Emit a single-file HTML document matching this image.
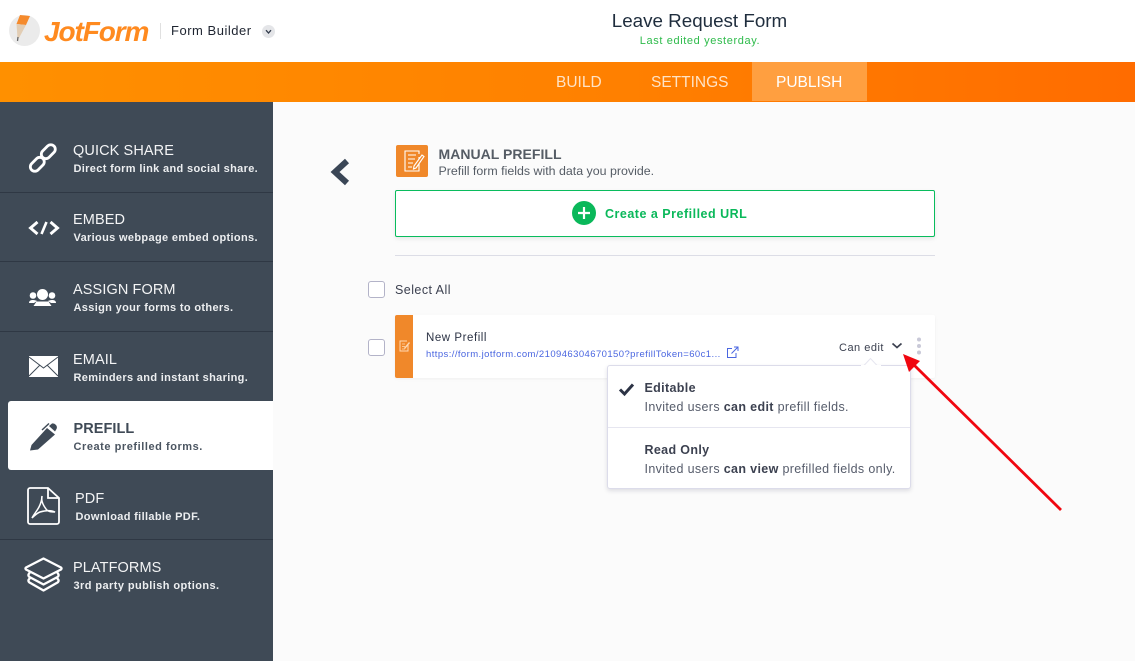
<!DOCTYPE html>
<html><head><meta charset="utf-8"><style>
*{box-sizing:border-box}
html,body{margin:0;padding:0}
body{width:1135px;height:661px;position:relative;overflow:hidden;background:#fbfbfb;font-family:"Liberation Sans",sans-serif;color:#2c3345}
.a,.t{position:absolute;white-space:nowrap}
.t{line-height:16px}
.h{color:#f3f4f5;font-size:14.5px;letter-spacing:.1px}
.s{color:#eceef0;font-size:11px;font-weight:bold;letter-spacing:.34px}
.sep{position:absolute;left:0;width:273px;height:1px;background:#2f3844}
svg{position:absolute;overflow:visible}
</style></head><body>
<div class="a" style="left:0;top:0;width:1135px;height:62px;background:#fff"></div>
<div class="a" style="left:9px;top:15px;width:31px;height:31px;border-radius:50%;background:#ebebeb"></div>
<svg style="left:9px;top:15px" width="31" height="31"><path d="M11 0L21 1L17 10L7.500 9Z" fill="#f58a2c"/><path d="M7.500 9L17 10L10 23L8.500 23Z" fill="#e2cdb4"/><path d="M9 22L8.500 26" stroke="#666" stroke-width="1.300"/></svg>
<div class="t" style="left:44px;top:14px;font-size:28px;line-height:36px;font-weight:bold;font-style:italic;color:#ff8a1f;letter-spacing:-1.1px">JotForm</div>
<div class="a" style="left:160px;top:23px;width:1px;height:16px;background:#e0e0e0"></div>
<div class="t" style="left:171px;top:23px;font-size:13px;color:#1e2430;letter-spacing:.52px">Form Builder</div>
<div class="a" style="left:262px;top:25px;width:13px;height:13px;border-radius:50%;background:#e4e5e8"></div>
<svg style="left:262px;top:25px" width="13" height="13"><path d="M4 5.200L6.500 8L9 5.200" fill="none" stroke="#333c4c" stroke-width="1.300"/></svg>
<div class="t" style="left:540px;width:319px;text-align:center;top:10px;font-size:18.800px;line-height:22px;color:#1f2d3d">Leave Request Form</div>
<div class="t" style="left:540px;width:320px;text-align:center;top:33px;font-size:11px;color:#2ebb4b;letter-spacing:.62px">Last edited yesterday.</div>

<div class="a" style="left:0;top:62px;width:1135px;height:40px;background:linear-gradient(90deg,#ff9000 0%,#ff8000 55%,#ff6c00 100%)"></div>
<div class="a" style="left:752px;top:62px;width:115px;height:39px;background:#ff9f40"></div>
<div class="t" style="left:556px;top:75px;font-size:15.500px;color:#ffe3c6">BUILD</div>
<div class="t" style="left:651px;top:75px;font-size:15.500px;color:#ffe3c6">SETTINGS</div>
<div class="t" style="left:776px;top:75px;font-size:15.500px;color:#fff">PUBLISH</div>

<div class="a" style="left:0;top:102px;width:273px;height:559px;background:#3f4a56"></div>
<div class="sep" style="top:192px"></div><div class="sep" style="top:261px"></div><div class="sep" style="top:331px"></div><div class="sep" style="top:539px"></div>
<div class="a" style="left:8px;top:401px;width:265px;height:69px;background:#fff;border-radius:3px 0 0 3px"></div>

<div class="t h" style="left:73px;top:143px">QUICK SHARE</div><div class="t s" style="left:73.500px;top:161px">Direct form link and social share.</div>
<div class="t h" style="left:73px;top:212px">EMBED</div><div class="t s" style="left:73.500px;top:230px">Various webpage embed options.</div>
<div class="t h" style="left:73px;top:282px">ASSIGN FORM</div><div class="t s" style="left:73.500px;top:300px">Assign your forms to others.</div>
<div class="t h" style="left:73px;top:352px">EMAIL</div><div class="t s" style="left:73.500px;top:370px">Reminders and instant sharing.</div>
<div class="t h" style="left:73.500px;top:421px;color:#3f4a56;font-weight:bold;letter-spacing:.05px">PREFILL</div><div class="t s" style="left:73.500px;top:439px;color:#4b5561;letter-spacing:.55px">Create prefilled forms.</div>
<div class="t h" style="left:75px;top:491px">PDF</div><div class="t s" style="left:75.500px;top:509px">Download fillable PDF.</div>
<div class="t h" style="left:73px;top:560px">PLATFORMS</div><div class="t s" style="left:73.500px;top:578px;letter-spacing:.42px">3rd party publish options.</div>

<svg style="left:28px;top:143px" width="30" height="30" fill="none" stroke="#fff" stroke-width="2.800"><rect x="12.300" y="4.200" width="16" height="9" rx="4.500" transform="rotate(-45 20.300 8.700)"/><rect x="1.300" y="16.800" width="16" height="9" rx="4.500" transform="rotate(-45 9.300 21.300)"/></svg>
<svg style="left:28px;top:220px" width="32" height="16" fill="none" stroke="#fff" stroke-width="2.900"><path d="M9.500 2L2.500 8L9.500 14"/><path d="M22.500 2L29.500 8L22.500 14"/><path d="M18.500 2L13.500 14" stroke-width="2.600"/></svg>
<svg style="left:29px;top:288px" width="28" height="18" fill="#fff"><circle cx="13.500" cy="6.500" r="5.500"/><circle cx="4" cy="7.500" r="3.300"/><circle cx="23" cy="7.500" r="3.300"/><path d="M4.500 18L7.500 13.500H19.500L22.500 18Z"/><path d="M0 15C0 12.500 2 12 4 12C6 12 7 12.500 8 13L5 15Z"/><path d="M27 15C27 12.500 25 12 23 12C21 12 20 12.500 19 13L22 15Z"/></svg>
<svg style="left:29px;top:356px" width="29" height="21"><path d="M0 0H29V21H0Z" fill="#fff"/><path d="M0 1L14.500 12L29 1M0 20L10.500 9.500M29 20L18.500 9.500" fill="none" stroke="#3f4a56" stroke-width="1"/></svg>
<svg style="left:29px;top:421px" width="29" height="30" fill="#3f4a56"><path d="M1 29.500L2.500 24L18 7L26 13.500L9 28.500Z"/><path d="M20 5L23 2.500Q25 2 27 4Q28.500 6 27.500 8L26 10.500Z"/><path d="M13 9L20 2.500" stroke="#3f4a56" stroke-width="1.500"/></svg>
<svg style="left:27px;top:487px" width="33" height="38" fill="none" stroke="#fff" stroke-width="1.800"><path d="M3 1H21L32 11V35C32 36 31 37 30 37H3C2 37 1 36 1 35V3C1 2 2 1 3 1Z"/><path d="M21 1V11H32"/><path d="M15 9C14 13 16 18 19 22C21 25 25 25 28 25C24 23 18 23.500 13 25C10 26 7 29 5 31C7 27 10 24 12 20C14 16 15 12 15 9Z" stroke-width="1.500"/></svg>
<svg style="left:24px;top:557px" width="39" height="37" fill="none" stroke="#fff" stroke-width="2.300" stroke-linejoin="round"><path d="M6 21L4.500 23Q4 24.500 5.500 25.500L19.500 33.500L33.500 25.500Q35 24.500 34.500 23L33 21"/><path d="M6 15L4.500 17.500Q4 19 5.500 20L19.500 27.500L33.500 20Q35 19 34.500 17.500L33 15"/><path d="M19.500 1.500L37 10.500Q38 11.500 37 12.500L19.500 21.500L2 12.500Q1 11.500 2 10.500Z" fill="#3f4a56"/></svg>

<svg style="left:328px;top:158px" width="21" height="28"><path d="M19 3L7 14L19 25" fill="none" stroke="#3a4656" stroke-width="6"/></svg>
<div class="a" style="left:396px;top:145px;width:32px;height:32px;background:#f0882a;border-radius:2px"></div>
<svg style="left:396px;top:145px" width="32" height="32" fill="none" stroke="#fff" stroke-width="1.100"><path d="M23 12V26H9V6H23V9"/><path d="M12 10H20M12 14H19M12 18H17M12 22H16"/><path d="M18 21L26 10L28 11.500L20 23L17.500 24Z" fill="#f0882a"/></svg>
<div class="t" style="left:438.500px;top:146px;font-size:14px;font-weight:bold;color:#555c65;letter-spacing:.03px">MANUAL PREFILL</div>
<div class="t" style="left:438.500px;top:163px;font-size:12.400px;color:#555c65">Prefill form fields with data you provide.</div>
<div class="a" style="left:395px;top:190px;width:540px;height:47px;background:#fff;border:1px solid #09bc5d;border-radius:2px;box-shadow:0 2px 4px rgba(0,0,0,.08)"></div>
<div class="a" style="left:572px;top:201px;width:24px;height:24px;border-radius:50%;background:#0ab85a"></div>
<svg style="left:572px;top:201px" width="24" height="24"><path d="M12 6V18M6 12H18" stroke="#fff" stroke-width="2.200"/></svg>
<div class="t" style="left:605px;top:205.500px;font-size:12.500px;font-weight:bold;color:#0ab85a;letter-spacing:.5px">Create a Prefilled URL</div>
<div class="a" style="left:395px;top:255px;width:540px;height:1px;background:#dcdde6"></div>

<div class="a" style="left:368px;top:281px;width:17px;height:17px;border:1px solid #b3b3c8;border-radius:3px;background:#fff"></div>
<div class="t" style="left:395px;top:282px;font-size:12.500px;color:#3c4150;letter-spacing:.45px">Select All</div>
<div class="a" style="left:368px;top:339px;width:17px;height:16.500px;border:1px solid #b3b3c8;border-radius:3px;background:#fff"></div>
<div class="a" style="left:395px;top:315px;width:540px;height:63px;background:#fff;border-radius:2px;box-shadow:0 1px 3px rgba(0,0,0,.05)"></div>
<div class="a" style="left:395px;top:315px;width:18px;height:63px;background:#f0882a;border-radius:2px 0 0 2px"></div>
<svg style="left:395px;top:338px" width="18" height="16" fill="none" stroke="#ffd9b3" stroke-width="1"><path d="M13 7V13H5V3H12"/><path d="M7 6H10M7 8.500H10M7 11H10" stroke-width=".8"/><path d="M9 10L14 4L15 5L10 11Z" fill="#ffd9b3" stroke="none"/></svg>
<div class="t" style="left:426px;top:330px;font-size:11.500px;color:#2c3345;letter-spacing:.55px">New Prefill</div>
<div class="t" style="left:426px;top:347px;font-size:9.500px;color:#4a66e0;letter-spacing:.42px">https://form.jotform.com/210946304670150?prefillToken=60c1...</div>
<svg style="left:726px;top:346px" width="13" height="13" fill="none" stroke="#4a66e0" stroke-width="1"><path d="M6 2.500H1.500V11.500H10V7"/><path d="M5.500 7.500L11.500 1.500M8 1H12V5"/></svg>
<div class="t" style="left:839px;top:340px;font-size:11px;color:#3c4150;letter-spacing:.5px">Can edit</div>
<svg style="left:891px;top:342px" width="12" height="8"><path d="M1.500 1.500L6 5.500L10.500 1.500" fill="none" stroke="#3c4150" stroke-width="1.700"/></svg>
<svg style="left:915px;top:336px" width="8" height="22" fill="#c9c9d8"><circle cx="4" cy="3.500" r="2"/><circle cx="4" cy="10" r="2"/><circle cx="4" cy="16.500" r="2"/></svg>

<div class="a" style="left:607px;top:365px;width:304px;height:124px;background:#fff;border:1px solid #dcdcea;border-radius:3px;box-shadow:0 2px 4px rgba(40,40,80,.14)"></div>
<svg style="left:860px;top:358px" width="22" height="9"><path d="M3 8.500L10.500 .5L18 8.500" fill="#fff" stroke="#e6e6f0"/></svg>
<div class="a" style="left:861px;top:365px;width:20px;height:2px;background:#fff"></div>
<div class="a" style="left:608px;top:427px;width:302px;height:1px;background:#e6e6f0"></div>
<svg style="left:618px;top:382px" width="18" height="15"><path d="M2 7.500L6.500 12L15 2.500" fill="none" stroke="#2c3345" stroke-width="3"/></svg>
<div class="t" style="left:644.500px;top:380px;font-size:12.500px;font-weight:bold;color:#3c4150;letter-spacing:.35px">Editable</div>
<div class="t" style="left:644.500px;top:399px;font-size:12.500px;color:#565c6b;letter-spacing:.35px">Invited users <b style="color:#3c4150">can edit</b> prefill fields.</div>
<div class="t" style="left:644.500px;top:442px;font-size:12.500px;font-weight:bold;color:#3c4150;letter-spacing:.35px">Read Only</div>
<div class="t" style="left:644.500px;top:461px;font-size:12.500px;color:#565c6b;letter-spacing:.35px">Invited users <b style="color:#3c4150">can view</b> prefilled fields only.</div>

<svg style="left:895px;top:348px" width="175" height="170"><path d="M166 162L18 16" stroke="#f0060f" stroke-width="2.800" fill="none"/><path d="M8 6L25 13L14 24Z" fill="#f0060f"/></svg>
</body></html>
